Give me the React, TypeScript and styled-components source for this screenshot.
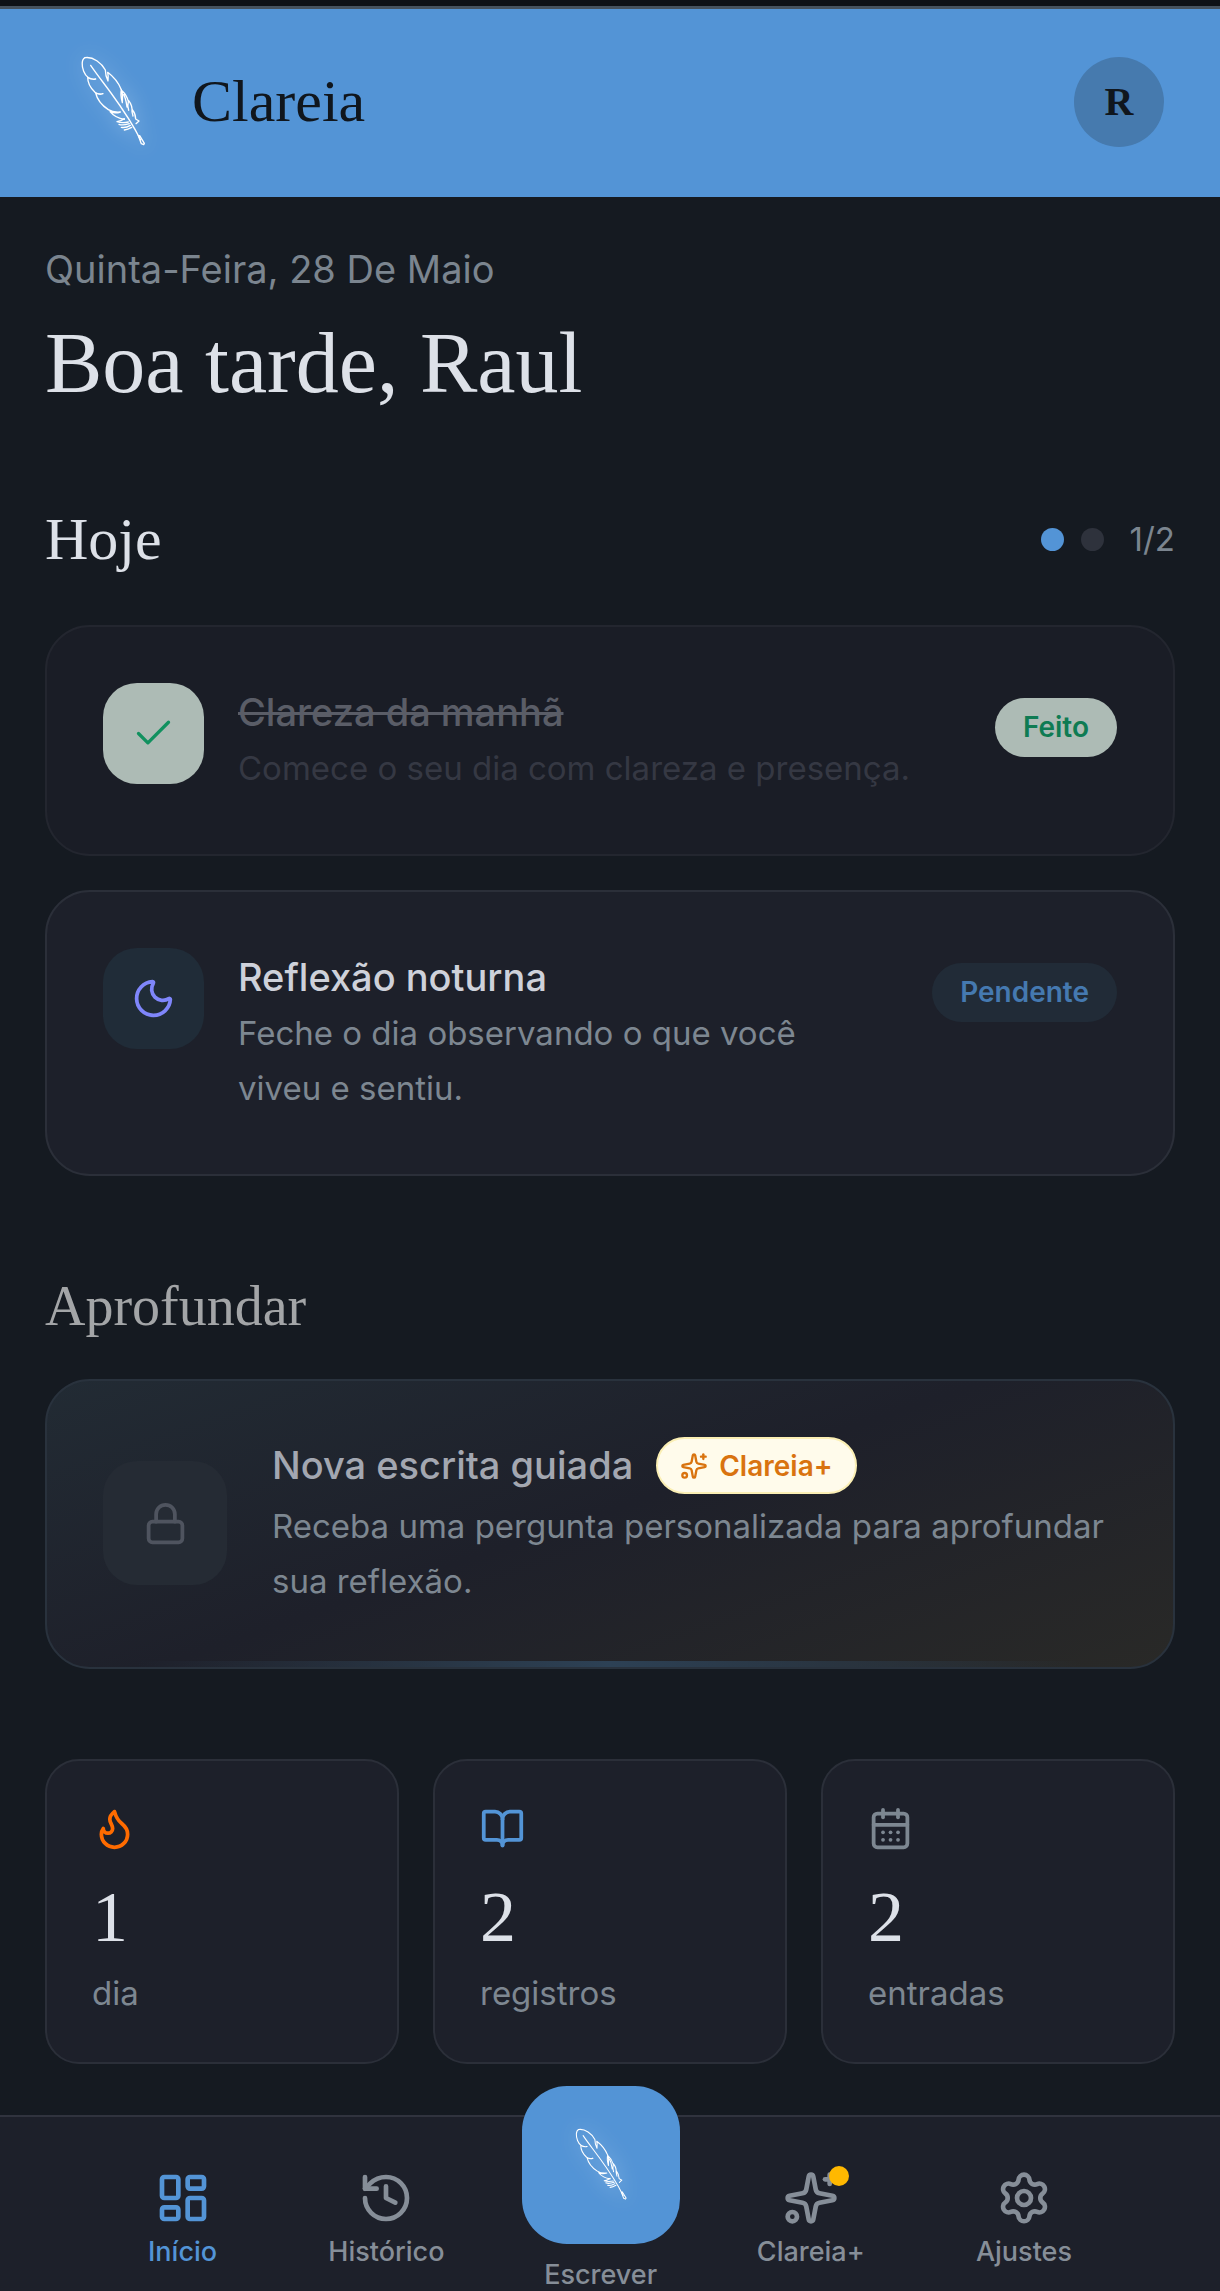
import React from 'react';
import styled, { createGlobalStyle } from 'styled-components';
import {
  BookOpen,
  CalendarDays,
  Check,
  Flame,
  History,
  LayoutDashboard,
  Lock,
  Moon,
  Settings,
  Sparkles,
} from 'lucide-react';

const serif = '"Liberation Serif", serif';
const sans = 'Inter, "Open Sans", sans-serif';

const GlobalStyle = createGlobalStyle`
  *, *::before, *::after { box-sizing: border-box; }
  body { margin: 0; background: #151a21; }
  h1, h2, h3, p { margin: 0; font-weight: 400; }
  button { font: inherit; color: inherit; border: 0; padding: 0; background: none; cursor: pointer; }
  svg { display: block; flex: none; }
`;

const Page = styled.div`
  min-height: 100vh;
  display: flex;
  flex-direction: column;
  font-family: ${sans};
  background: #151a21;
  color: #dde1e8;
`;

const Header = styled.header`
  display: flex;
  align-items: center;
  justify-content: space-between;
  height: 197px;
  padding: 0 56px 0 68px;
  border-top: 6px solid #0e1217;
  box-shadow: inset 0 3px 0 #46535f;
  background: #5394d6;
`;

const Brand = styled.div`
  display: flex;
  align-items: center;
  gap: 34px;
  font-family: ${serif};
  font-size: 60px;
  color: #10161d;
`;

const Avatar = styled.button`
  width: 90px;
  height: 90px;
  border-radius: 50%;
  background: #467aae;
  font-family: ${serif};
  font-size: 40px;
  font-weight: 700;
  color: #10161d;
`;

const Main = styled.main`
  padding: 44px 45px 51px;
`;

const DateLine = styled.p`
  font-size: 38px;
  line-height: 56px;
  color: #7b858f;
`;

const Greeting = styled.h1`
  margin-top: 16px;
  font-family: ${serif};
  font-size: 86px;
  line-height: 100px;
`;

const SectionHead = styled.div`
  display: flex;
  align-items: center;
  justify-content: space-between;
  margin-top: 90px;
`;

const SectionTitle = styled.h2<{ $muted?: boolean }>`
  font-family: ${serif};
  font-size: ${(p) => (p.$muted ? 56 : 60)}px;
  line-height: 72px;
  color: ${(p) => (p.$muted ? '#a3a5a7' : '#dde1e8')};
`;

const Progress = styled.div`
  display: flex;
  align-items: center;
  gap: 17px;
  font-size: 33px;
  color: #7b858f;
`;

const Dot = styled.span<{ $active?: boolean }>`
  width: 23px;
  height: 23px;
  border-radius: 50%;
  background: ${(p) => (p.$active ? '#5394d6' : '#2e323c')};
`;

const Count = styled.span`
  margin-left: 9px;
`;

const Stack = styled.div`
  display: grid;
  gap: 34px;
  margin-top: 50px;
`;

const Card = styled.article<{ $done?: boolean }>`
  display: flex;
  align-items: flex-start;
  gap: 34px;
  padding: 56px 56px 58px;
  border: 2px solid ${(p) => (p.$done ? '#23262f' : '#2b2f39')};
  border-radius: 45px;
  background: ${(p) => (p.$done ? '#1a1d26' : '#1d202a')};
`;

const Tile = styled.div<{ $bg: string; $color: string; $size?: number }>`
  display: flex;
  align-items: center;
  justify-content: center;
  flex: none;
  width: ${(p) => p.$size ?? 101}px;
  height: ${(p) => p.$size ?? 101}px;
  border-radius: 34px;
  background: ${(p) => p.$bg};
  color: ${(p) => p.$color};
`;

const CardText = styled.div`
  flex: 1;
  min-width: 0;
`;

const CardTitle = styled.h3<{ $done?: boolean }>`
  font-size: 38px;
  font-weight: 500;
  line-height: 58px;
  color: ${(p) => (p.$done ? '#5a5d67' : '#ced1da')};
  text-decoration: ${(p) => (p.$done ? 'line-through' : 'none')};
`;

const CardDesc = styled.p<{ $done?: boolean }>`
  font-size: 33px;
  line-height: 55px;
  color: ${(p) => (p.$done ? '#353843' : '#7d8791')};
`;

const Status = styled.span<{ $done?: boolean }>`
  flex: none;
  margin: 15px 0 0 22px;
  padding: 0 28px;
  border-radius: 30px;
  font-size: 28px;
  font-weight: 600;
  line-height: 59px;
  background: ${(p) => (p.$done ? '#adbbb5' : '#212b37')};
  color: ${(p) => (p.$done ? '#0f7b53' : '#4579b0')};
`;

const GuidedHeading = styled.div`
  margin: 94px 0 37px;
`;

const GuidedCard = styled(Card)`
  position: relative;
  overflow: hidden;
  align-items: center;
  gap: 45px;
  border-color: #29323d;
  background: linear-gradient(161deg, #222b34 0%, #1e202a 48%, #292927 100%);

  &::after {
    content: '';
    position: absolute;
    right: 0;
    bottom: 0;
    left: 0;
    height: 6px;
    background: linear-gradient(90deg, transparent 8%, #2d4155 50%, transparent 92%);
  }
`;

const GuidedRow = styled.div`
  display: flex;
  align-items: center;
  gap: 23px;
  margin-bottom: 5px;
`;

const GuidedTitle = styled.h3`
  font-size: 38px;
  font-weight: 500;
  line-height: 57px;
  color: #a3a7b1;
`;

const PlusBadge = styled.span`
  display: flex;
  align-items: center;
  gap: 11px;
  height: 57px;
  padding: 0 22px;
  border: 2px solid #fbefb4;
  border-radius: 30px;
  background: #fffbeb;
  font-size: 28px;
  font-weight: 600;
  color: #d9730f;
`;

const Stats = styled.section`
  display: grid;
  grid-template-columns: repeat(3, 1fr);
  gap: 34px;
  margin-top: 90px;
`;

const StatCard = styled.div<{ $color: string }>`
  padding: 45px;
  border: 2px solid #2b2f39;
  border-radius: 34px;
  background: #1d202a;

  svg { color: ${(p) => p.$color}; }
`;

const StatValue = styled.p`
  margin: 26px 0 12px;
  font-family: ${serif};
  font-size: 72px;
  line-height: 80px;
`;

const StatLabel = styled.p`
  font-size: 33px;
  line-height: 48px;
  color: #7d8791;
`;

const Nav = styled.nav`
  flex: 1;
  display: flex;
  align-items: flex-start;
  justify-content: space-between;
  padding: 53px 114px 0;
  border-top: 2px solid #30333e;
  background: #1d202a;
`;

const NavItem = styled.button<{ $active?: boolean }>`
  display: flex;
  flex-direction: column;
  align-items: center;
  gap: 10px;
  padding: 0 34px;
  font-size: 27px;
  font-weight: 500;
  line-height: 32px;
  color: ${(p) => (p.$active ? '#5394d6' : '#868e98')};
`;

const WriteItem = styled(NavItem)`
  gap: 15px;
  margin-top: -84px;
  padding: 0;
`;

const WriteTile = styled.span`
  display: flex;
  align-items: center;
  justify-content: center;
  width: 158px;
  height: 158px;
  border-radius: 45px;
  background: #5394d6;
`;

const IconWrap = styled.span`
  position: relative;
`;

const Notice = styled.span`
  position: absolute;
  top: -4px;
  right: -10px;
  width: 20px;
  height: 20px;
  border-radius: 50%;
  background: #ffb800;
`;

const Glow = styled.svg`
  overflow: visible;
  filter: drop-shadow(0 0 10px rgba(255, 255, 255, 0.5));
`;

function Feather({ size }: { size: number }) {
  return (
    <Glow
      width={size}
      height={size}
      viewBox="25 45 270 270"
      fill="none"
      stroke="#fff"
      strokeWidth={4}
      strokeLinecap="round"
      strokeLinejoin="round"
      aria-hidden="true"
    >
      <path d="M93 70C112 98 133 124 154 153C184 194 216 240 243 294" />
      <path d="M236 281L245 305L252 308L254 304L240 281" />
      <path d="M76 47C65 52 66 73 72 88C76 98 80 103 86 107C92 111 100 112 108 111C98 113 90 110 84 106C84 124 93 139 106 151C113 156 121 157 130 155C123 158 115 157 108 153C113 175 128 191 146 203C157 210 169 211 182 210C171 214 160 213 151 209C162 222 179 230 194 232" />
      <path d="M76 47C100 43 126 63 137 84C137 96 140 107 145 117C146 107 146 98 144 91C163 105 178 126 185 143" />
      <path d="M185 143C182 155 184 168 188 182C189 169 189 157 187 146C197 155 203 166 206 178C204 186 204 196 207 205M192 158C199 170 200 182 202 195M207 176C215 186 218 197 217 209L220 222M218 203C225 212 228 222 228 231L238 237L229 245" />
      <path d="M194 230C187 235 180 238 172 239C185 243 196 242 206 240M178 247C188 251 200 248 209 245M185 256C195 258 204 255 212 250M194 264C202 263 209 260 216 256" />
    </Glow>
  );
}

const stats = [
  { icon: Flame, color: '#ff6b00', value: '1', label: 'dia' },
  { icon: BookOpen, color: '#5394d6', value: '2', label: 'registros' },
  { icon: CalendarDays, color: '#7d8791', value: '2', label: 'entradas' },
];

export default function App() {
  return (
    <Page>
      <GlobalStyle />
      <Header>
        <Brand>
          <Feather size={90} />
          Clareia
        </Brand>
        <Avatar type="button">R</Avatar>
      </Header>

      <Main>
        <DateLine>Quinta-Feira, 28 De Maio</DateLine>
        <Greeting>Boa tarde, Raul</Greeting>

        <section>
          <SectionHead>
            <SectionTitle>Hoje</SectionTitle>
            <Progress>
              <Dot $active />
              <Dot />
              <Count>1/2</Count>
            </Progress>
          </SectionHead>
          <Stack>
            <Card $done>
              <Tile $bg="#adbbb5" $color="#11915f">
                <Check size={45} strokeWidth={1.75} />
              </Tile>
              <CardText>
                <CardTitle $done>Clareza da manhã</CardTitle>
                <CardDesc $done>Comece o seu dia com clareza e presença.</CardDesc>
              </CardText>
              <Status $done>Feito</Status>
            </Card>
            <Card>
              <Tile $bg="#202c38" $color="#7f86fb">
                <Moon size={45} strokeWidth={2} />
              </Tile>
              <CardText>
                <CardTitle>Reflexão noturna</CardTitle>
                <CardDesc>Feche o dia observando o que você viveu e sentiu.</CardDesc>
              </CardText>
              <Status>Pendente</Status>
            </Card>
          </Stack>
        </section>

        <section>
          <GuidedHeading>
            <SectionTitle $muted>Aprofundar</SectionTitle>
          </GuidedHeading>
          <GuidedCard>
            <Tile $bg="#252b34" $color="#4f545f" $size={124}>
              <Lock size={45} strokeWidth={2} />
            </Tile>
            <CardText>
              <GuidedRow>
                <GuidedTitle>Nova escrita guiada</GuidedTitle>
                <PlusBadge>
                  <Sparkles size={28} strokeWidth={2} />
                  Clareia+
                </PlusBadge>
              </GuidedRow>
              <CardDesc>Receba uma pergunta personalizada para aprofundar sua reflexão.</CardDesc>
            </CardText>
          </GuidedCard>
        </section>

        <Stats>
          {stats.map(({ icon: Icon, color, value, label }) => (
            <StatCard key={label} $color={color}>
              <Icon size={45} strokeWidth={2} />
              <StatValue>{value}</StatValue>
              <StatLabel>{label}</StatLabel>
            </StatCard>
          ))}
        </Stats>
      </Main>

      <Nav>
        <NavItem type="button" $active>
          <LayoutDashboard size={56} strokeWidth={2} />
          Início
        </NavItem>
        <NavItem type="button">
          <History size={56} strokeWidth={2} />
          Histórico
        </NavItem>
        <WriteItem type="button">
          <WriteTile>
            <Feather size={72} />
          </WriteTile>
          Escrever
        </WriteItem>
        <NavItem type="button">
          <IconWrap>
            <Sparkles size={56} strokeWidth={2} />
            <Notice />
          </IconWrap>
          Clareia+
        </NavItem>
        <NavItem type="button">
          <Settings size={56} strokeWidth={2} />
          Ajustes
        </NavItem>
      </Nav>
    </Page>
  );
}
